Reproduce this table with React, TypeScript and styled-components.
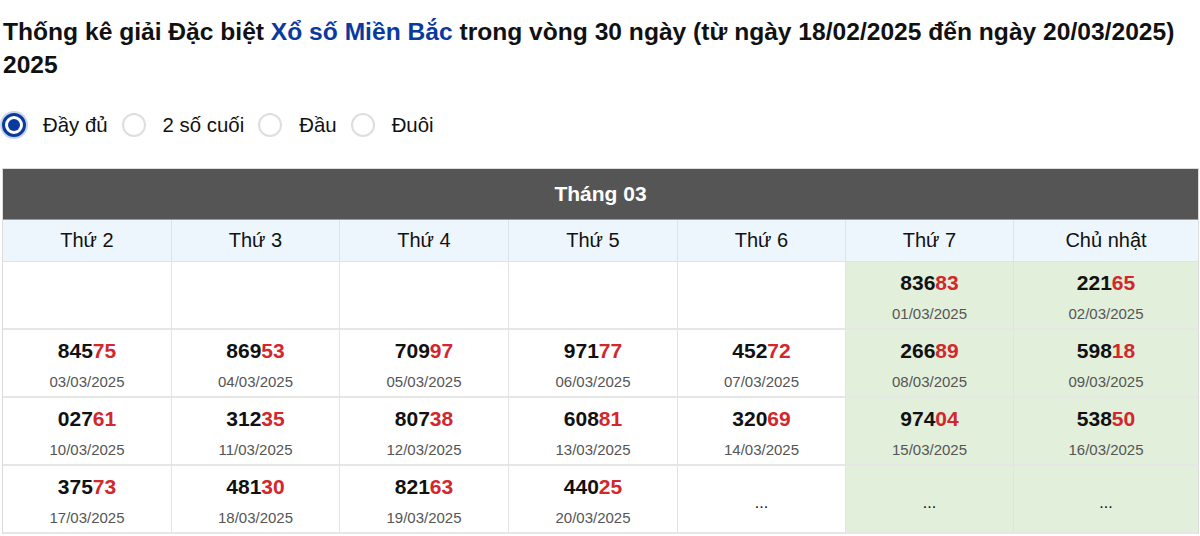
import React from "react";
import styled, { createGlobalStyle } from "styled-components";

const Global = createGlobalStyle`
  html, body { margin: 0; padding: 0; background: #fff; }
  body { font-family: "Liberation Sans", Arial, sans-serif; color: #000; }
`;

const Page = styled.div`
  padding: 15px 1px 0 2px;
`;

const Title = styled.h1`
  margin: 0;
  padding-left: 1px;
  font-size: 24.6px;
  line-height: 33px;
  font-weight: 700;
  color: #111;
`;

const TitleLink = styled.span`
  color: #0b3a9f;
`;

const RadioRow = styled.div`
  display: flex;
  align-items: center;
  margin-top: 32px;
  height: 24px;
`;

const RadioItem = styled.label`
  display: flex;
  align-items: center;
  gap: 17px;
  margin-right: 14px;
  font-size: 20.4px;
  color: #111;
`;

const RadioCircle = styled.span<{ $checked?: boolean }>`
  box-sizing: border-box;
  width: 24px;
  height: 24px;
  border-radius: 50%;
  display: flex;
  align-items: center;
  justify-content: center;
  border: ${(p) => (p.$checked ? "3px solid #0b3a9f" : "2px solid #dedede")};
  box-shadow: ${(p) => (p.$checked ? "0 0 0 2px rgba(11,58,159,0.22)" : "none")};
  background: #fff;
  &::after {
    content: "";
    display: ${(p) => (p.$checked ? "block" : "none")};
    width: 12px;
    height: 12px;
    border-radius: 50%;
    background: #0b3a9f;
  }
`;

const Table = styled.div`
  margin-top: 31px;
  border: 1px solid #dcdcdc;
  border-bottom: none;
  display: grid;
  grid-template-columns: 169px 168px 169px 169px 168px 168px 1fr;
`;

const MonthHeader = styled.div`
  grid-column: 1 / -1;
  height: 50px;
  background: #555555;
  color: #fff;
  font-size: 21px;
  font-weight: 700;
  display: flex;
  align-items: center;
  justify-content: center;
  border-bottom: 1px solid #9a9a9a;
`;

const DayHead = styled.div<{ $last?: boolean }>`
  box-sizing: border-box;
  height: 42px;
  background: #eef6fd;
  border-right: ${(p) => (p.$last ? "none" : "1px solid #dde3ea")};
  border-bottom: 1px solid #dde3ea;
  display: flex;
  align-items: center;
  justify-content: center;
  font-size: 20px;
  color: #111;
`;

const Cell = styled.div<{ $weekend?: boolean; $last?: boolean; $center?: boolean }>`
  box-sizing: border-box;
  height: 68px;
  padding-top: ${(p) => (p.$center ? "7px" : "7px")};
  background: ${(p) => (p.$weekend ? "#e2efdb" : "#fff")};
  border-right: ${(p) => (p.$last ? "none" : "1px solid #e2e2e2")};
  border-bottom: 2px solid #e6e6e6;
  display: flex;
  flex-direction: column;
  align-items: center;
  justify-content: ${(p) => (p.$center ? "center" : "flex-start")};
`;

const Number = styled.div`
  font-size: 21px;
  line-height: 28px;
  font-weight: 700;
  color: #111;
`;

const Tail = styled.span`
  color: #d3262d;
`;

const DateText = styled.div`
  margin-top: 7px;
  font-size: 15px;
  line-height: 20px;
  color: #555;
`;

const Dots = styled.div`
  font-size: 16px;
  color: #111;
`;

type Entry = { n: string; d: string } | null | "more";

const days = ["Thứ 2", "Thứ 3", "Thứ 4", "Thứ 5", "Thứ 6", "Thứ 7", "Chủ nhật"];

const rows: Entry[][] = [
  [null, null, null, null, null, { n: "83683", d: "01/03/2025" }, { n: "22165", d: "02/03/2025" }],
  [
    { n: "84575", d: "03/03/2025" },
    { n: "86953", d: "04/03/2025" },
    { n: "70997", d: "05/03/2025" },
    { n: "97177", d: "06/03/2025" },
    { n: "45272", d: "07/03/2025" },
    { n: "26689", d: "08/03/2025" },
    { n: "59818", d: "09/03/2025" },
  ],
  [
    { n: "02761", d: "10/03/2025" },
    { n: "31235", d: "11/03/2025" },
    { n: "80738", d: "12/03/2025" },
    { n: "60881", d: "13/03/2025" },
    { n: "32069", d: "14/03/2025" },
    { n: "97404", d: "15/03/2025" },
    { n: "53850", d: "16/03/2025" },
  ],
  [
    { n: "37573", d: "17/03/2025" },
    { n: "48130", d: "18/03/2025" },
    { n: "82163", d: "19/03/2025" },
    { n: "44025", d: "20/03/2025" },
    "more",
    "more",
    "more",
  ],
];

const options = ["Đầy đủ", "2 số cuối", "Đầu", "Đuôi"];

export default function App() {
  return (
    <>
      <Global />
      <Page>
        <Title>
          Thống kê giải Đặc biệt <TitleLink>Xổ số Miền Bắc</TitleLink> trong vòng 30 ngày (từ ngày
          18/02/2025 đến ngày 20/03/2025) 2025
        </Title>
        <RadioRow>
          {options.map((o, i) => (
            <RadioItem key={o}>
              <RadioCircle $checked={i === 0} />
              {o}
            </RadioItem>
          ))}
        </RadioRow>
        <Table>
          <MonthHeader>Tháng 03</MonthHeader>
          {days.map((d, i) => (
            <DayHead key={d} $last={i === 6}>
              {d}
            </DayHead>
          ))}
          {rows.map((row, r) =>
            row.map((e, c) => {
              const weekend = c >= 5;
              const last = c === 6;
              if (e === "more") {
                return (
                  <Cell key={`${r}-${c}`} $weekend={weekend} $last={last} $center>
                    <Dots>...</Dots>
                  </Cell>
                );
              }
              if (!e) {
                return <Cell key={`${r}-${c}`} $weekend={weekend} $last={last} />;
              }
              return (
                <Cell key={`${r}-${c}`} $weekend={weekend} $last={last}>
                  <Number>
                    {e.n.slice(0, 3)}
                    <Tail>{e.n.slice(3)}</Tail>
                  </Number>
                  <DateText>{e.d}</DateText>
                </Cell>
              );
            })
          )}
        </Table>
      </Page>
    </>
  );
}
